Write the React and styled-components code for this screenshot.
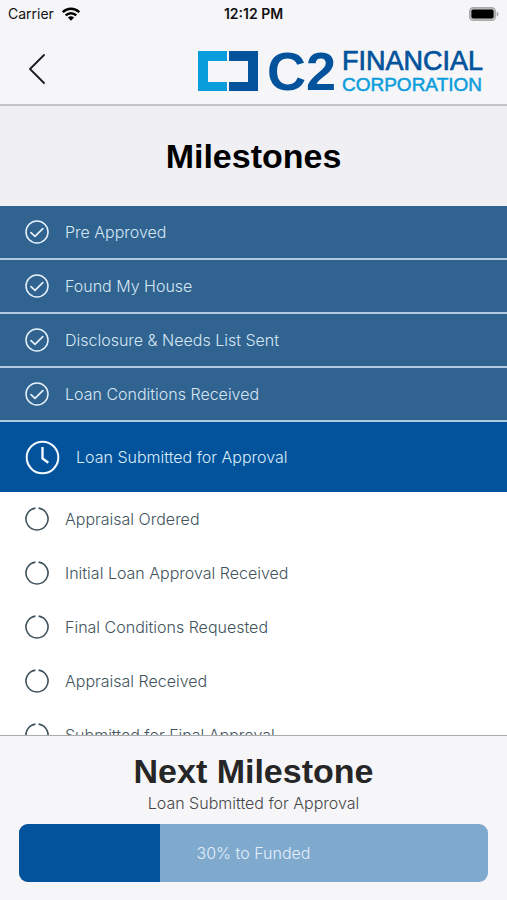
import React from 'react'
import styled, { createGlobalStyle } from 'styled-components'

const milestones = [
  { name: 'Pre Approved', status: 'done' },
  { name: 'Found My House', status: 'done' },
  { name: 'Disclosure & Needs List Sent', status: 'done' },
  { name: 'Loan Conditions Received', status: 'done' },
  { name: 'Loan Submitted for Approval', status: 'current' },
  { name: 'Appraisal Ordered', status: 'pending' },
  { name: 'Initial Loan Approval Received', status: 'pending' },
  { name: 'Final Conditions Requested', status: 'pending' },
  { name: 'Appraisal Received', status: 'pending' },
  { name: 'Submitted for Final Approval', status: 'pending' },
]

const percent = 30

const WifiIcon = () => (
  <svg width="18" height="14" viewBox="0 0 18 14" aria-hidden="true">
    <g fill="none" stroke="#000" strokeWidth="2.4">
      <path d="M0.8 5.2a11.6 11.6 0 0 1 16.4 0" />
      <path d="M3.7 8.4a7.5 7.5 0 0 1 10.6 0" />
    </g>
    <path d="M9 13.8L5.9 10.6a4.4 4.4 0 0 1 6.2 0z" fill="#000" />
  </svg>
)

const BatteryIcon = () => (
  <svg width="30" height="14" viewBox="0 0 30 14" aria-hidden="true">
    <rect x="0.75" y="0.75" width="25.5" height="12.5" rx="3.6" fill="#c4c4c6" stroke="#a9a9ab" strokeWidth="1.5" />
    <rect x="2.4" y="2.4" width="22.2" height="9.2" rx="1.8" fill="#000" />
    <path d="M27.6 4.4c2.6 0.9 2.6 4.3 0 5.2z" fill="#a9a9ab" />
  </svg>
)

const BackIcon = () => (
  <svg width="18" height="30" viewBox="0 0 18 30" aria-hidden="true">
    <path d="M16 1L2 15l14 14" fill="none" stroke="#1c1c1e" strokeWidth="1.8" strokeLinecap="round" strokeLinejoin="round" />
  </svg>
)

const LogoMark = () => (
  <svg width="60" height="40" viewBox="0 0 60 40" aria-hidden="true">
    <path d="M0 0H29V10H10V31H29V40H0z" fill="#0a9ddc" />
    <path d="M31 0H60V40H31V31H50V10H31z" fill="#02539c" />
  </svg>
)

const StatusIcon = ({ status }) => {
  if (status === 'done') {
    return (
      <svg width="24" height="24" viewBox="0 0 24 24" aria-hidden="true">
        <g fill="none" stroke="#e6f1fb" strokeLinecap="round" strokeLinejoin="round">
          <circle cx="12" cy="12" r="11" strokeWidth="1.5" />
          <path d="M6 12.6l4 3.8 7.8-7.8" strokeWidth="1.7" />
        </g>
      </svg>
    )
  }
  if (status === 'current') {
    return (
      <svg width="35" height="35" viewBox="0 0 35 35" aria-hidden="true">
        <g fill="none" stroke="#f4faff" strokeWidth="2">
          <circle cx="17.5" cy="17.5" r="15.8" />
          <path d="M17.5 7V18.4l5.8 4.4" strokeWidth="2.4" />
        </g>
      </svg>
    )
  }
  return (
    <svg width="24" height="24" viewBox="0 0 24 24" aria-hidden="true">
      <path d="M13.6 1.1A11 11 0 1 1 10.4 1.1" fill="none" stroke="#3f525d" strokeWidth="1.6" />
    </svg>
  )
}

const App = () => {
  const current = milestones.find((m) => m.status === 'current')
  return (
    <>
      <GlobalStyle />
      <Screen>
        <StatusBar>
          <Carrier>
            Carrier
            <WifiIcon />
          </Carrier>
          <Clock>12:12 PM</Clock>
          <Battery>
            <BatteryIcon />
          </Battery>
        </StatusBar>
        <Header>
          <BackButton type="button" aria-label="Back">
            <BackIcon />
          </BackButton>
          <Logo>
            <LogoMark />
            <LogoName>C2</LogoName>
            <LogoWords>
              <Financial>FINANCIAL</Financial>
              <Corporation>CORPORATION</Corporation>
            </LogoWords>
          </Logo>
        </Header>
        <TitleBar>
          <Title>Milestones</Title>
        </TitleBar>
        <List>
          {milestones.map((m) => (
            <Milestone key={m.name} $status={m.status}>
              <StatusIcon status={m.status} />
              <span>{m.name}</span>
            </Milestone>
          ))}
        </List>
        <Footer>
          <NextTitle>Next Milestone</NextTitle>
          <NextName>{current.name}</NextName>
          <Progress role="progressbar" aria-valuenow={percent} aria-valuemin={0} aria-valuemax={100}>
            <ProgressFill style={{ width: `${percent}%` }} />
            <ProgressLabel>{percent}% to Funded</ProgressLabel>
          </Progress>
        </Footer>
      </Screen>
    </>
  )
}

const GlobalStyle = createGlobalStyle`
* {
    box-sizing: border-box;
}
body {
    margin: 0;
    background: #f6f6f8;
    font-family: Inter, "Liberation Sans", sans-serif;
    font-size: 16px;
    font-weight: 300;
    line-height: 20px;
}
`
const Screen = styled.div`
display: flex;
flex-direction: column;
height: 100vh;
`
const StatusBar = styled.div`
display: grid;
grid-template-columns: 1fr auto 1fr;
align-items: center;
flex-shrink: 0;
height: 28px;
padding: 0 8px;
font-size: 14px;
font-weight: 400;
color: #111;
`
const Carrier = styled.div`
display: flex;
align-items: center;
gap: 8px;
`
const Clock = styled.div`
font-weight: 600;
`
const Battery = styled.div`
display: flex;
justify-content: flex-end;
`
const Header = styled.header`
display: flex;
align-items: center;
justify-content: space-between;
flex-shrink: 0;
height: 78px;
padding: 6px 24px 0 22px;
border-bottom: 2px solid #c4c4c8;
`
const BackButton = styled.button`
display: flex;
padding: 6px;
border: none;
background: transparent;
cursor: pointer;
`
const Logo = styled.div`
display: flex;
align-items: center;
margin-top: 4px;
font-family: "Liberation Sans", Arial, sans-serif;
color: #02539c;
`
const LogoName = styled.span`
margin-left: 9px;
font-size: 54px;
font-weight: 700;
line-height: 40px;
`
const LogoWords = styled.div`
display: flex;
flex-direction: column;
margin-left: 6px;
padding-top: 4px;
font-weight: 400;
line-height: 24px;
`
const Financial = styled.span`
font-size: 27px;
-webkit-text-stroke: 0.7px #02539c;
`
const Corporation = styled.span`
font-size: 19px;
color: #0a9ddc;
-webkit-text-stroke: 0.5px #0a9ddc;
`
const TitleBar = styled.div`
display: flex;
align-items: center;
justify-content: center;
flex-shrink: 0;
height: 100px;
background: #efeff4;
`
const Title = styled.h1`
margin: 0;
font-family: "Liberation Sans", Arial, sans-serif;
font-size: 34px;
font-weight: 700;
line-height: 40px;
color: #000;
`
const List = styled.ul`
flex: 1;
min-height: 0;
margin: 0;
padding: 0;
list-style: none;
overflow-y: auto;
scrollbar-width: none;
background: #fff;
`
const rowColors = {
  done: { background: '#30638f', text: '#d6e6f4' },
  current: { background: '#02539c', text: '#dcebf8' },
  pending: { background: '#fff', text: '#42535d' },
}
const Milestone = styled.li`
display: flex;
align-items: center;
gap: 16px;
height: ${(props) => (props.$status === 'current' ? 70 : 54)}px;
padding: 0 25px;
border-bottom: ${(props) => (props.$status === 'done' ? '2px solid #b0cbe2' : 'none')};
background: ${(props) => rowColors[props.$status].background};
color: ${(props) => rowColors[props.$status].text};
svg {
    flex-shrink: 0;
}
`
const Footer = styled.footer`
flex-shrink: 0;
padding: 15px 19px 18px;
border-top: 1px solid #a9abad;
background: #f6f6f8;
text-align: center;
`
const NextTitle = styled.h2`
margin: 0;
font-family: "Liberation Sans", Arial, sans-serif;
font-size: 34px;
font-weight: 700;
line-height: 40px;
color: #262626;
`
const NextName = styled.p`
margin: 2px 0 11px;
color: #464648;
`
const Progress = styled.div`
display: grid;
height: 58px;
border-radius: 9px;
overflow: hidden;
background: #80a9ce;
`
const ProgressFill = styled.div`
grid-area: 1 / 1;
background: #02539c;
`
const ProgressLabel = styled.span`
grid-area: 1 / 1;
align-self: center;
color: #e3eefa;
`

export default App
